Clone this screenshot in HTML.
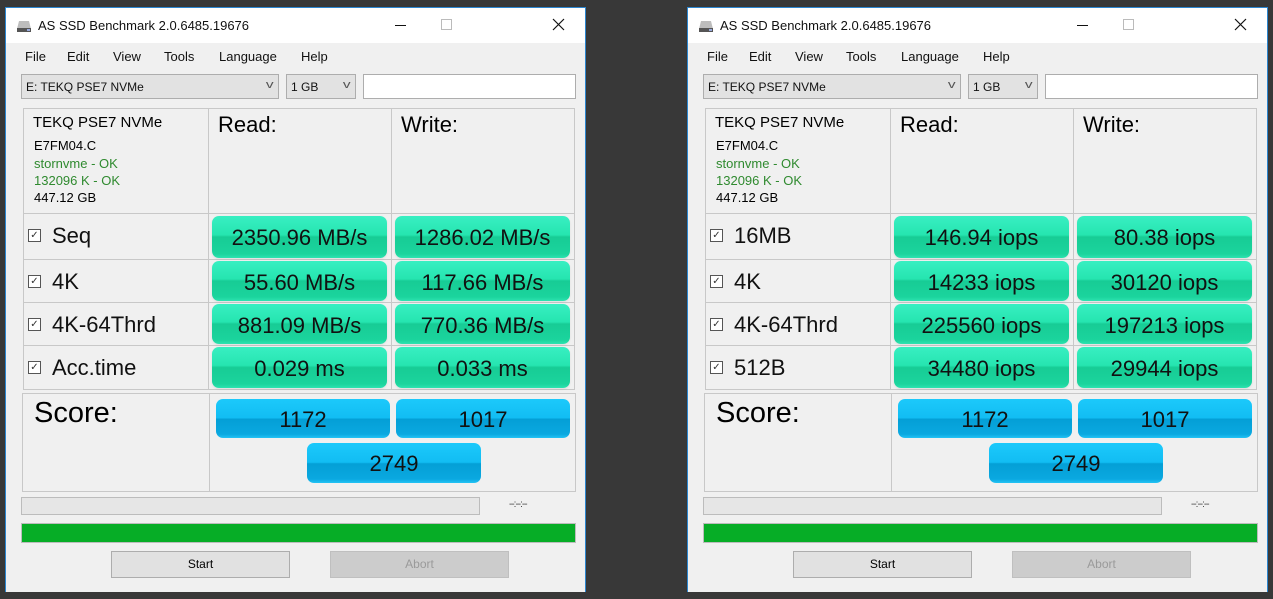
<!DOCTYPE html>
<html><head><meta charset="utf-8"><style>
*{box-sizing:border-box;margin:0;padding:0}
body{width:1273px;height:599px;background:#383838;position:relative;overflow:hidden;font-family:"Liberation Sans",sans-serif;color:#000}
.win{position:absolute;top:7px;width:581px;height:585px;background:#f0f0f0;border-left:1px solid #2b86d0;border-right:1px solid #2b86d0;border-top:1px solid #2b86d0}
.a{position:absolute}
.title{left:0;top:0;width:100%;height:35px;background:#fff}
.ttl{left:32px;top:10px;font-size:13px;color:#111}
.menu{top:41px;font-size:13px;color:#111}
.cb{background:#e2e2e2;border:1px solid #adadad;height:25px;font-size:12px;padding:5px 4px;color:#111}
.cb i{position:absolute;right:6px;top:4px;font-style:normal;font-size:11px;color:#555;transform:scaleX(1.4)}
.cell{border:1px solid #c8c8c8;background:#f0f0f0}
.lbl{font-size:22px;color:#111}
.chk{width:13px;height:13px;border:1px solid #555;background:#fff;font-size:10px;line-height:11px;text-align:center;color:#333}
.g{border-radius:7px;background:linear-gradient(#38efc2 0%,#26e5b0 45%,#17cc95 50%,#1bd49d 90%,#2de3b0 100%);font-size:22px;text-align:center;line-height:44px;color:#111;box-shadow:0 1px 2px rgba(0,0,0,.08)}
.b{border-radius:7px;background:linear-gradient(#1cc9fb 0%,#12bdf3 48%,#049fd6 52%,#0aa8e0 90%,#23c3f5 100%);font-size:22px;text-align:center;line-height:42px;color:#111}
.btn{border:1px solid #adadad;background:#e1e1e1;font-size:12px;text-align:center;line-height:24px}
</style></head><body>

<!-- WINDOW TEMPLATE (left) -->
<div class="win" style="left:5px">
 <div class="a title"></div>
 <svg class="a" style="left:10px;top:12px" width="16" height="12"><path d="M3 1h10l2 8H1z" fill="#bdbdbd"/><rect x="1" y="8" width="14" height="4" fill="#555"/><rect x="11" y="9" width="3" height="2" fill="#9ad"/></svg>
 <div class="a ttl">AS SSD Benchmark 2.0.6485.19676</div>
 <div class="a" style="left:389px;top:17px;width:11px;height:1px;background:#111"></div>
 <div class="a" style="left:435px;top:11px;width:11px;height:11px;border:1px solid #bbb"></div>
 <svg class="a" style="left:546px;top:10px" width="13" height="13"><path d="M1 1L12 12M12 1L1 12" stroke="#111" stroke-width="1.2"/></svg>
 <div class="a menu" style="left:19px">File</div>
 <div class="a menu" style="left:61px">Edit</div>
 <div class="a menu" style="left:107px">View</div>
 <div class="a menu" style="left:158px">Tools</div>
 <div class="a menu" style="left:213px">Language</div>
 <div class="a menu" style="left:295px">Help</div>
 <div class="a cb" style="left:15px;top:66px;width:258px">E: TEKQ PSE7 NVMe<i>v</i></div>
 <div class="a cb" style="left:280px;top:66px;width:70px">1 GB<i>v</i></div>
 <div class="a" style="left:357px;top:66px;width:213px;height:25px;background:#fff;border:1px solid #adadad"></div>
 <!-- grid -->
 <div class="a cell" style="left:17px;top:100px;width:186px;height:106px"></div>
 <div class="a cell" style="left:202px;top:100px;width:184px;height:106px"></div>
 <div class="a cell" style="left:385px;top:100px;width:184px;height:106px"></div>
 <div class="a" style="left:27px;top:106px;font-size:15px">TEKQ PSE7 NVMe</div>
 <div class="a" style="left:28px;top:130px;font-size:13px">E7FM04.C</div>
 <div class="a" style="left:28px;top:148px;font-size:13px;color:#2f8a2f">stornvme - OK</div>
 <div class="a" style="left:28px;top:165px;font-size:13px;color:#2f8a2f">132096 K - OK</div>
 <div class="a" style="left:28px;top:182px;font-size:13px">447.12 GB</div>
 <div class="a" style="left:212px;top:104px;font-size:22px">Read:</div>
 <div class="a" style="left:395px;top:104px;font-size:22px">Write:</div>
 <div class="a cell" style="left:17px;top:205px;width:186px;height:47px"></div><div class="a cell" style="left:202px;top:205px;width:184px;height:47px"></div><div class="a cell" style="left:385px;top:205px;width:184px;height:47px"></div>
 <div class="a cell" style="left:17px;top:251px;width:186px;height:44px"></div><div class="a cell" style="left:202px;top:251px;width:184px;height:44px"></div><div class="a cell" style="left:385px;top:251px;width:184px;height:44px"></div>
 <div class="a cell" style="left:17px;top:294px;width:186px;height:44px"></div><div class="a cell" style="left:202px;top:294px;width:184px;height:44px"></div><div class="a cell" style="left:385px;top:294px;width:184px;height:44px"></div>
 <div class="a cell" style="left:17px;top:337px;width:186px;height:45px"></div><div class="a cell" style="left:202px;top:337px;width:184px;height:45px"></div><div class="a cell" style="left:385px;top:337px;width:184px;height:45px"></div>
 <div class="a chk" style="left:22px;top:221px">✓</div><div class="a lbl" style="left:46px;top:215px">Seq</div>
 <div class="a chk" style="left:22px;top:267px">✓</div><div class="a lbl" style="left:46px;top:261px">4K</div>
 <div class="a chk" style="left:22px;top:310px">✓</div><div class="a lbl" style="left:46px;top:304px">4K-64Thrd</div>
 <div class="a chk" style="left:22px;top:353px">✓</div><div class="a lbl" style="left:46px;top:347px">Acc.time</div>
 <div class="a g" style="left:206px;top:208px;width:175px;height:42px">2350.96 MB/s</div>
 <div class="a g" style="left:389px;top:208px;width:175px;height:42px">1286.02 MB/s</div>
 <div class="a g" style="left:206px;top:253px;width:175px;height:40px">55.60 MB/s</div>
 <div class="a g" style="left:389px;top:253px;width:175px;height:40px">117.66 MB/s</div>
 <div class="a g" style="left:206px;top:296px;width:175px;height:40px">881.09 MB/s</div>
 <div class="a g" style="left:389px;top:296px;width:175px;height:40px">770.36 MB/s</div>
 <div class="a g" style="left:206px;top:339px;width:175px;height:41px">0.029 ms</div>
 <div class="a g" style="left:389px;top:339px;width:175px;height:41px">0.033 ms</div>
 <div class="a cell" style="left:16px;top:385px;width:188px;height:99px"></div>
 <div class="a cell" style="left:203px;top:385px;width:367px;height:99px"></div>
 <div class="a" style="left:28px;top:389px;font-size:29px">Score:</div>
 <div class="a b" style="left:210px;top:391px;width:174px;height:39px">1172</div>
 <div class="a b" style="left:390px;top:391px;width:174px;height:39px">1017</div>
 <div class="a b" style="left:301px;top:435px;width:174px;height:40px">2749</div>
 <div class="a" style="left:15px;top:489px;width:459px;height:18px;background:#e6e6e6;border:1px solid #bcbcbc"></div>
 <div class="a" style="left:503px;top:491px;font-size:10px;color:#444;letter-spacing:-1px">--:--:--</div>
 <div class="a" style="left:15px;top:515px;width:555px;height:20px;background:#06ad26;border:1px solid #bcbcbc"></div>
 <div class="a btn" style="left:105px;top:543px;width:179px;height:27px">Start</div>
 <div class="a btn" style="left:324px;top:543px;width:179px;height:27px;background:#cccccc;color:#9a9a9a;border-color:#bfbfbf">Abort</div>
</div>

<!-- right window -->
<div class="win" style="left:687px">
 <div class="a title"></div>
 <svg class="a" style="left:10px;top:12px" width="16" height="12"><path d="M3 1h10l2 8H1z" fill="#bdbdbd"/><rect x="1" y="8" width="14" height="4" fill="#555"/><rect x="11" y="9" width="3" height="2" fill="#9ad"/></svg>
 <div class="a ttl">AS SSD Benchmark 2.0.6485.19676</div>
 <div class="a" style="left:389px;top:17px;width:11px;height:1px;background:#111"></div>
 <div class="a" style="left:435px;top:11px;width:11px;height:11px;border:1px solid #bbb"></div>
 <svg class="a" style="left:546px;top:10px" width="13" height="13"><path d="M1 1L12 12M12 1L1 12" stroke="#111" stroke-width="1.2"/></svg>
 <div class="a menu" style="left:19px">File</div>
 <div class="a menu" style="left:61px">Edit</div>
 <div class="a menu" style="left:107px">View</div>
 <div class="a menu" style="left:158px">Tools</div>
 <div class="a menu" style="left:213px">Language</div>
 <div class="a menu" style="left:295px">Help</div>
 <div class="a cb" style="left:15px;top:66px;width:258px">E: TEKQ PSE7 NVMe<i>v</i></div>
 <div class="a cb" style="left:280px;top:66px;width:70px">1 GB<i>v</i></div>
 <div class="a" style="left:357px;top:66px;width:213px;height:25px;background:#fff;border:1px solid #adadad"></div>
 <div class="a cell" style="left:17px;top:100px;width:186px;height:106px"></div>
 <div class="a cell" style="left:202px;top:100px;width:184px;height:106px"></div>
 <div class="a cell" style="left:385px;top:100px;width:184px;height:106px"></div>
 <div class="a" style="left:27px;top:106px;font-size:15px">TEKQ PSE7 NVMe</div>
 <div class="a" style="left:28px;top:130px;font-size:13px">E7FM04.C</div>
 <div class="a" style="left:28px;top:148px;font-size:13px;color:#2f8a2f">stornvme - OK</div>
 <div class="a" style="left:28px;top:165px;font-size:13px;color:#2f8a2f">132096 K - OK</div>
 <div class="a" style="left:28px;top:182px;font-size:13px">447.12 GB</div>
 <div class="a" style="left:212px;top:104px;font-size:22px">Read:</div>
 <div class="a" style="left:395px;top:104px;font-size:22px">Write:</div>
 <div class="a cell" style="left:17px;top:205px;width:186px;height:47px"></div><div class="a cell" style="left:202px;top:205px;width:184px;height:47px"></div><div class="a cell" style="left:385px;top:205px;width:184px;height:47px"></div>
 <div class="a cell" style="left:17px;top:251px;width:186px;height:44px"></div><div class="a cell" style="left:202px;top:251px;width:184px;height:44px"></div><div class="a cell" style="left:385px;top:251px;width:184px;height:44px"></div>
 <div class="a cell" style="left:17px;top:294px;width:186px;height:44px"></div><div class="a cell" style="left:202px;top:294px;width:184px;height:44px"></div><div class="a cell" style="left:385px;top:294px;width:184px;height:44px"></div>
 <div class="a cell" style="left:17px;top:337px;width:186px;height:45px"></div><div class="a cell" style="left:202px;top:337px;width:184px;height:45px"></div><div class="a cell" style="left:385px;top:337px;width:184px;height:45px"></div>
 <div class="a chk" style="left:22px;top:221px">✓</div><div class="a lbl" style="left:46px;top:215px">16MB</div>
 <div class="a chk" style="left:22px;top:267px">✓</div><div class="a lbl" style="left:46px;top:261px">4K</div>
 <div class="a chk" style="left:22px;top:310px">✓</div><div class="a lbl" style="left:46px;top:304px">4K-64Thrd</div>
 <div class="a chk" style="left:22px;top:353px">✓</div><div class="a lbl" style="left:46px;top:347px">512B</div>
 <div class="a g" style="left:206px;top:208px;width:175px;height:42px">146.94 iops</div>
 <div class="a g" style="left:389px;top:208px;width:175px;height:42px">80.38 iops</div>
 <div class="a g" style="left:206px;top:253px;width:175px;height:40px">14233 iops</div>
 <div class="a g" style="left:389px;top:253px;width:175px;height:40px">30120 iops</div>
 <div class="a g" style="left:206px;top:296px;width:175px;height:40px">225560 iops</div>
 <div class="a g" style="left:389px;top:296px;width:175px;height:40px">197213 iops</div>
 <div class="a g" style="left:206px;top:339px;width:175px;height:41px">34480 iops</div>
 <div class="a g" style="left:389px;top:339px;width:175px;height:41px">29944 iops</div>
 <div class="a cell" style="left:16px;top:385px;width:188px;height:99px"></div>
 <div class="a cell" style="left:203px;top:385px;width:367px;height:99px"></div>
 <div class="a" style="left:28px;top:389px;font-size:29px">Score:</div>
 <div class="a b" style="left:210px;top:391px;width:174px;height:39px">1172</div>
 <div class="a b" style="left:390px;top:391px;width:174px;height:39px">1017</div>
 <div class="a b" style="left:301px;top:435px;width:174px;height:40px">2749</div>
 <div class="a" style="left:15px;top:489px;width:459px;height:18px;background:#e6e6e6;border:1px solid #bcbcbc"></div>
 <div class="a" style="left:503px;top:491px;font-size:10px;color:#444;letter-spacing:-1px">--:--:--</div>
 <div class="a" style="left:15px;top:515px;width:555px;height:20px;background:#06ad26;border:1px solid #bcbcbc"></div>
 <div class="a btn" style="left:105px;top:543px;width:179px;height:27px">Start</div>
 <div class="a btn" style="left:324px;top:543px;width:179px;height:27px;background:#cccccc;color:#9a9a9a;border-color:#bfbfbf">Abort</div>
</div>
</body></html>
